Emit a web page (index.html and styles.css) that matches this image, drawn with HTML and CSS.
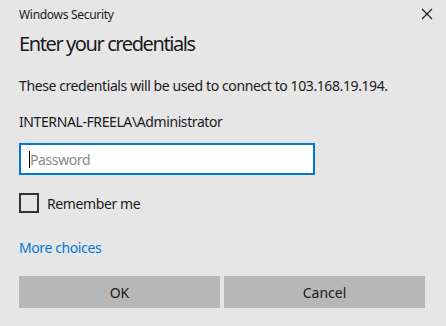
FILE: index.html
```html
<!DOCTYPE html>
<html lang="en">
<head>
    <meta charset="UTF-8">
    <meta name="viewport" content="width=device-width, initial-scale=1.0">
    <title>Windows Security</title>
    <link rel="stylesheet" href="styles.css">
</head>
<body>
    <div class="dialog">
        <div class="titlebar">
            <span class="app-name">Windows Security</span>
            <span class="close">
                <svg width="12" height="12" viewBox="0 0 12 12">
                    <path d="M1 1 L11 11 M11 1 L1 11" stroke="#1a1a1a" stroke-width="1.1" fill="none"/>
                </svg>
            </span>
        </div>

        <h1 class="heading">Enter your credentials</h1>

        <p class="message">These credentials will be used to connect to 103.168.19.194.</p>
        <p class="user">INTERNAL-FREELA\Administrator</p>

        <div class="password-box">
            <span class="caret"></span>
            <span class="placeholder">Password</span>
        </div>

        <label class="remember">
            <span class="checkbox"></span>
            <span>Remember me</span>
        </label>

        <a class="more" href="#">More choices</a>

        <div class="buttons">
            <button class="btn">OK</button>
            <button class="btn">Cancel</button>
        </div>
    </div>
</body>
</html>
```

FILE: styles.css
```css
* {
    margin: 0;
    padding: 0;
    box-sizing: border-box;
}

body {
    background-color: #e6e6e6;
    font-family: "Noto Sans", "Open Sans", sans-serif;
    color: #1a1a1a;
    letter-spacing: -0.4px;
}

.dialog {
    padding: 0 21px 0 19px;
}

.titlebar {
    display: flex;
    justify-content: space-between;
    align-items: center;
    height: 28px;
}

.app-name {
    font-size: 12px;
    letter-spacing: -0.3px;
}

.close {
    display: flex;
    margin-right: -8px;
}

.heading {
    font-size: 20px;
    font-weight: normal;
    letter-spacing: -1.4px;
    margin-top: 1px;
    line-height: 30px;
}

.message {
    font-size: 14px;
    margin-top: 17px;
    line-height: 20px;
}

.user {
    font-size: 14px;
    margin-top: 16px;
    line-height: 20px;
}

.password-box {
    width: 296px;
    height: 32px;
    margin-top: 11px;
    border: 2px solid #0078d7;
    background-color: white;
    display: flex;
    align-items: center;
    padding-left: 8px;
}

.caret {
    width: 1px;
    height: 17px;
    background-color: black;
}

.placeholder {
    font-size: 14px;
    color: #8a8a8a;
}

.remember {
    display: flex;
    align-items: center;
    gap: 8px;
    margin-top: 18px;
    font-size: 14px;
}

.checkbox {
    width: 20px;
    height: 20px;
    border: 2px solid #333;
}

.more {
    display: block;
    margin-top: 25px;
    font-size: 14px;
    color: #0078d7;
    text-decoration: none;
    line-height: 20px;
}

.buttons {
    display: flex;
    gap: 4px;
    margin-top: 18px;
}

.btn {
    flex: 1;
    height: 32px;
    background-color: #b7b7b7;
    border: none;
    font-family: inherit;
    font-size: 14px;
    color: #1a1a1a;
}
```
